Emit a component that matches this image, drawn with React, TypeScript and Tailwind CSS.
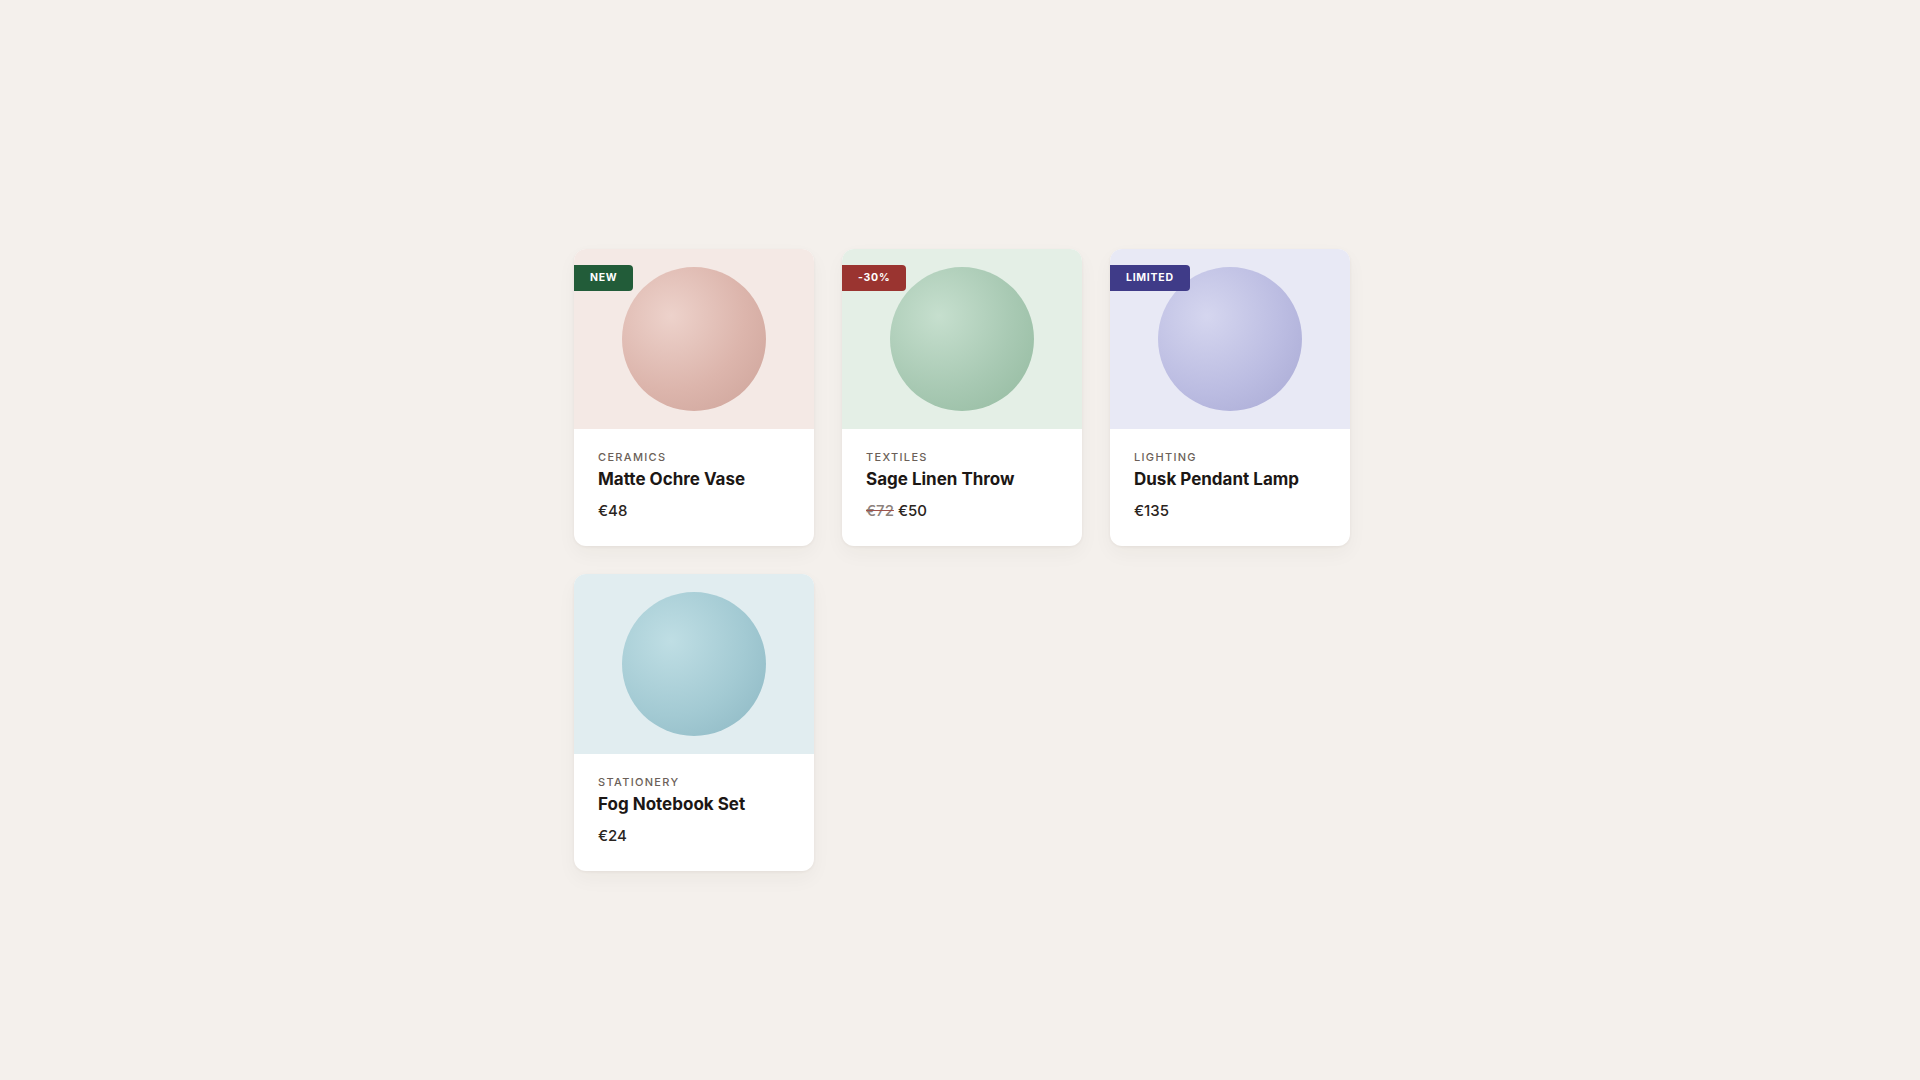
type Product = {
  category: string;
  name: string;
  price: string;
  oldPrice?: string;
  badge?: { label: string; className: string };
  imageBg: string;
  sphere: string;
};

const products: Product[] = [
  {
    category: "Ceramics",
    name: "Matte Ochre Vase",
    price: "€48",
    badge: { label: "NEW", className: "bg-[#225c39]" },
    imageBg: "bg-[#f4e9e5]",
    sphere: "bg-[radial-gradient(circle_at_34%_34%,#edd2cb_0%,#dcb5ac_55%,#cca298_100%)]",
  },
  {
    category: "Textiles",
    name: "Sage Linen Throw",
    price: "€50",
    oldPrice: "€72",
    badge: { label: "-30%", className: "bg-[#9a3430]" },
    imageBg: "bg-[#e4efe6]",
    sphere: "bg-[radial-gradient(circle_at_34%_34%,#c6dfce_0%,#a8c9b3_55%,#92b99e_100%)]",
  },
  {
    category: "Lighting",
    name: "Dusk Pendant Lamp",
    price: "€135",
    badge: { label: "LIMITED", className: "bg-[#3f3b88]" },
    imageBg: "bg-[#e8e9f5]",
    sphere: "bg-[radial-gradient(circle_at_34%_34%,#d5d6ef_0%,#bcbde2_55%,#a7a8d3_100%)]",
  },
  {
    category: "Stationery",
    name: "Fog Notebook Set",
    price: "€24",
    imageBg: "bg-[#e1edf0]",
    sphere: "bg-[radial-gradient(circle_at_34%_34%,#bfdee4_0%,#a3cad3_55%,#8bb6c2_100%)]",
  },
];

function ProductCard({ p }: { p: Product }) {
  return (
    <div className="w-[240px] rounded-xl bg-white overflow-hidden shadow-[0_1px_3px_rgba(60,40,30,0.06),0_8px_20px_rgba(60,40,30,0.04)]">
      <div className={`relative h-[180px] flex items-center justify-center ${p.imageBg}`}>
        <div className={`w-[144px] h-[144px] rounded-full ${p.sphere}`} />
        {p.badge && (
          <span
            className={`absolute left-0 top-4 h-[26px] flex items-center pt-px px-4 rounded-r text-[10.5px] leading-none font-bold tracking-[0.07em] text-white ${p.badge.className}`}
          >
            {p.badge.label}
          </span>
        )}
      </div>
      <div className="px-6 pt-5 pb-6">
        <div className="text-[11px] leading-4 font-medium uppercase tracking-[0.12em] text-[#6b5f58]">
          {p.category}
        </div>
        <div className="mt-0.5 text-[17px] leading-6 font-bold text-[#1c1715]">
          {p.name}
        </div>
        <div className="mt-[9px] text-[15px] leading-[22px] font-medium text-[#2a2420] flex gap-1">
          {p.oldPrice && (
            <span className="text-[#8c817c] line-through decoration-[#a0524a]">{p.oldPrice}</span>
          )}
          <span>{p.price}</span>
        </div>
      </div>
    </div>
  );
}

export default function App() {
  return (
    <div
      className="min-h-screen bg-[#f4f0ec] pt-[249px] pb-[209px] pl-1 flex justify-center items-start"
      style={{ fontFamily: "Inter, 'Noto Sans', sans-serif" }}
    >
      <div className="grid grid-cols-[repeat(3,240px)] gap-7">
        {products.map((p) => (
          <ProductCard key={p.name} p={p} />
        ))}
      </div>
    </div>
  );
}
